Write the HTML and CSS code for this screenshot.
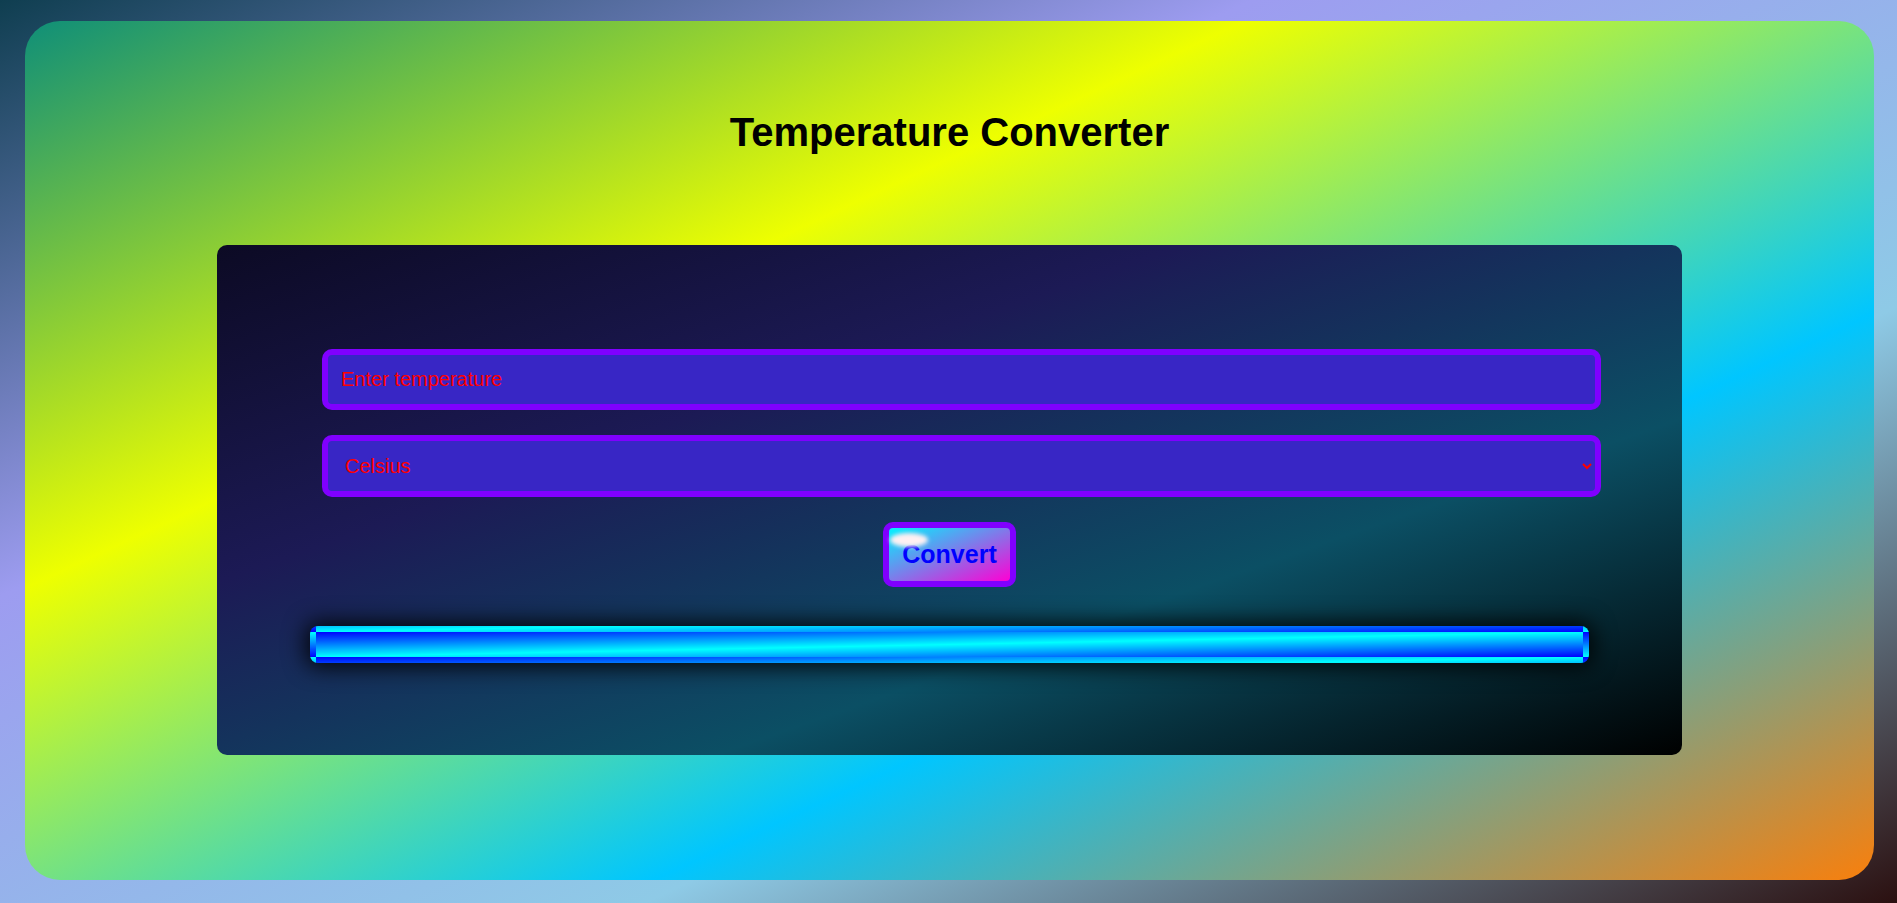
FILE: index.html
```html
<!DOCTYPE html>
<html lang="en">
<head>
<meta charset="utf-8">
<title>Temperature Converter</title>
<link rel="stylesheet" href="styles.css">
</head>
<body>
  <main class="card">
    <h1 class="title">Temperature Converter</h1>
    <section class="panel">
      <input class="field field-input" type="text" placeholder="Enter temperature">
      <select class="field field-select">
        <option>Celsius</option>
        <option>Fahrenheit</option>
        <option>Kelvin</option>
      </select>
      <button class="convert-btn" type="button">Convert</button>
      <div class="result"></div>
    </section>
  </main>
</body>
</html>
```

FILE: styles.css
```css
html, body {
  height: 100%;
}

body {
  margin: 0;
  padding: 21px 23px 23px 25px;
  box-sizing: border-box;
  font-family: "Liberation Sans", Arial, sans-serif;
  background: linear-gradient(to bottom right, #0f3e50 0%, #9d9cf0 33%, #8ecae6 67%, #2b1010 100%);
}

.card {
  height: 100%;
  box-sizing: border-box;
  padding-top: 88px;
  border-radius: 35px;
  background: linear-gradient(to bottom right, #0f8f78 0%, #eeff00 33%, #00c6ff 67%, #f97f0c 100%);
  display: flex;
  flex-direction: column;
  align-items: center;
}

.title {
  margin: 0;
  font-size: 40px;
  line-height: 46px;
  font-weight: bold;
  color: #000;
}

.panel {
  margin-top: 90px;
  width: 1465px;
  height: 510px;
  box-sizing: border-box;
  padding: 104px 93px 0;
  border-radius: 10px;
  background: linear-gradient(to bottom right, #0c0a24 0%, #1c1a55 33%, #0b4f64 67%, #000 100%);
  display: flex;
  flex-direction: column;
}

.field {
  display: block;
  width: 100%;
  margin: 0 0 0 12px;
  box-sizing: border-box;
  border: 6px solid #8000ff;
  border-radius: 10px;
  background: #3826c5;
  color: #ff0000;
  font-family: "Liberation Sans", Arial, sans-serif;
  font-size: 20px;
  outline: none;
}

.field-input {
  height: 61px;
  padding: 0 13px;
}

.field-input::placeholder {
  color: #ff0000;
  opacity: 1;
}

.field-select {
  height: 62px;
  margin-top: 25px;
  padding: 0 13px;
}

.convert-btn {
  position: relative;
  align-self: center;
  margin-top: 25px;
  padding: 12px 13px;
  border: 6px solid #8000ff;
  border-radius: 10px;
  background: linear-gradient(to bottom right, #00f4ff, #ff00d4);
  color: #0000ff;
  font-family: "Liberation Sans", Arial, sans-serif;
  font-size: 25px;
  line-height: 29px;
  font-weight: bold;
  cursor: pointer;
}

.convert-btn::after {
  content: "";
  position: absolute;
  left: 1px;
  top: 5px;
  width: 38px;
  height: 14px;
  border-radius: 50%;
  background: #fff0f2;
  filter: blur(2px);
}

.result {
  margin-top: 39px;
  height: 25px;
  border: 6px solid transparent;
  border-radius: 8px;
  background: linear-gradient(to bottom right, #0000ff, #00ffff, #0000ff);
  box-shadow: 0 0 22px 4px rgba(0, 0, 0, 0.9);
}
```
